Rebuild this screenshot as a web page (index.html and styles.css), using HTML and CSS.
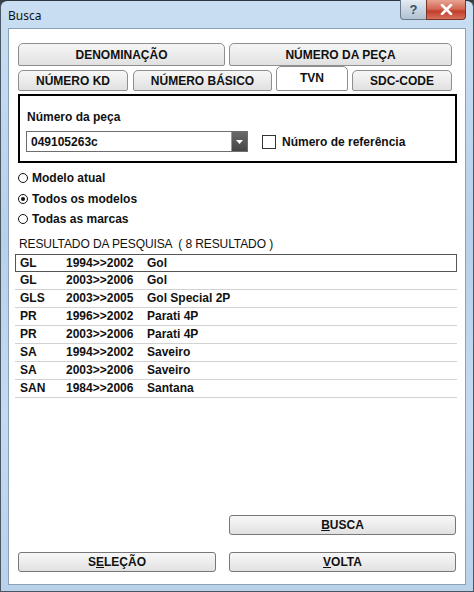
FILE: index.html
```html
<!DOCTYPE html>
<html lang="pt">
<head>
<meta charset="utf-8">
<title>Busca</title>
<link rel="stylesheet" href="styles.css">
</head>
<body>
<div class="window">
  <div class="titlebar">
    <span class="title">Busca</span>
    <div class="caption-buttons">
      <div class="cap-btn help">?</div>
      <div class="cap-btn close">
        <svg width="13" height="11" viewBox="0 0 13 11"><path d="M2 1 L11 10 M11 1 L2 10" stroke="#fff" stroke-width="2.6" stroke-linecap="round"/></svg>
      </div>
    </div>
  </div>
  <div class="client">
    <div class="tabs-row row1">
      <div class="tab w-denom">DENOMINAÇÃO</div>
      <div class="tab w-peca">NÚMERO DA PEÇA</div>
    </div>
    <div class="tabs-row row2">
      <div class="tab w-kd">NÚMERO KD</div>
      <div class="tab w-basico">NÚMERO BÁSICO</div>
      <div class="tab w-tvn active">TVN</div>
      <div class="tab w-sdc">SDC-CODE</div>
    </div>
    <div class="panel">
      <div class="label">Número da peça</div>
      <div class="panel-row">
        <div class="combo">
          <span class="combo-text">049105263c</span>
          <span class="combo-btn"><svg width="7" height="4" viewBox="0 0 7 4"><path d="M0 0 H7 L3.5 4 Z" fill="#fff"/></svg></span>
        </div>
        <label class="check"><span class="box"></span>Número de referência</label>
      </div>
    </div>
    <div class="radios">
      <div class="radio"><span class="circle"></span>Modelo atual</div>
      <div class="radio"><span class="circle on"></span>Todos os modelos</div>
      <div class="radio"><span class="circle"></span>Todas as marcas</div>
    </div>
    <div class="result-title">RESULTADO DA PESQUISA &nbsp;( 8 RESULTADO )</div>
    <div class="list">
      <div class="item focus"><span>GL</span><span>1994&gt;&gt;2002</span><span>Gol</span></div>
      <div class="item"><span>GL</span><span>2003&gt;&gt;2006</span><span>Gol</span></div>
      <div class="item"><span>GLS</span><span>2003&gt;&gt;2005</span><span>Gol Special 2P</span></div>
      <div class="item"><span>PR</span><span>1996&gt;&gt;2002</span><span>Parati 4P</span></div>
      <div class="item"><span>PR</span><span>2003&gt;&gt;2006</span><span>Parati 4P</span></div>
      <div class="item"><span>SA</span><span>1994&gt;&gt;2002</span><span>Saveiro</span></div>
      <div class="item"><span>SA</span><span>2003&gt;&gt;2006</span><span>Saveiro</span></div>
      <div class="item"><span>SAN</span><span>1984&gt;&gt;2006</span><span>Santana</span></div>
    </div>
    <div class="buttons">
      <div class="btn busca"><u>B</u>USCA</div>
      <div class="btn selecao">S<u>E</u>LEÇÃO</div>
      <div class="btn volta"><u>V</u>OLTA</div>
    </div>
  </div>
</div>
</body>
</html>
```

FILE: styles.css
```css
* { box-sizing: border-box; }
html, body { margin: 0; padding: 0; background: #3a3f45; }
body { width: 474px; height: 592px; overflow: hidden; font-family: "Liberation Sans", Arial, sans-serif; }

.window {
  width: 474px; height: 592px;
  display: flex; flex-direction: column;
  background: linear-gradient(180deg, #c9def2 0%, #b7d1ea 40%, #c4daf0 70%, #b9d2ea 100%);
  border: 1px solid #4a5866;
  border-top-color: #2c3540;
  border-radius: 7px 7px 0 0;
}

.titlebar {
  height: 27px; flex: none;
  display: flex; align-items: flex-start; justify-content: space-between;
}
.title { font-size: 12px; color: #111; padding: 6px 0 0 7px; font-family: "Noto Sans", "Liberation Sans", sans-serif; }
.caption-buttons { display: flex; margin-right: 7px; margin-top: -1px; }
.cap-btn {
  height: 20px; display: flex; align-items: center; justify-content: center;
  border: 1px solid #6b7a8a; border-top: none;
}
.help {
  width: 26px; border-radius: 0 0 0 4px; border-right: none;
  background: linear-gradient(180deg, #e4ecf4 0%, #c9d5e2 50%, #b3c2d2 100%);
  color: #3b4d63; font-size: 13px; font-weight: bold;
}
.close {
  width: 40px; border-radius: 0 0 4px 0;
  background: linear-gradient(180deg, #e8a493 0%, #d46a57 45%, #c2402c 60%, #d5705c 100%);
  border-color: #7a3328;
}

.client {
  flex: 1; margin: 0 7px 6px 7px;
  background: #fff;
  border: 1px solid #8aa1ba;
  display: flex; flex-direction: column;
  padding: 14px 9px 12px 6px;
}

.tabs-row { display: flex; margin-left: 3px; }
.row1 { gap: 4px; height: 23px; }
.row2 { height: 25px; align-items: flex-end; }
.tab {
  height: 21px;
  border: 1px solid #8e8e8e;
  border-radius: 5px 5px 2px 2px;
  background: linear-gradient(180deg, #f6f6f6 0%, #ececec 50%, #e0e0e0 100%);
  font-size: 12px; font-weight: bold; color: #111;
  display: flex; align-items: center; justify-content: center;
}
.row1 .tab { height: 23px; }
.w-denom { width: 207px; }
.w-peca { width: 223px; }
.w-kd { width: 110px; margin-right: 5px; }
.w-basico { width: 139px; margin-right: 4px; }
.w-tvn { width: 72px; margin-right: 4px; }
.w-sdc { width: 100px; }
.tab.active { height: 25px; background: #fff; align-items: flex-start; padding-top: 4px; }

.panel {
  margin: 3px 0 0 3px; width: 439px;
  border: 2px solid #000;
  padding: 14px 6px 9px 6px;
}
.label { font-size: 12px; font-weight: bold; line-height: 14px; color: #111; margin-left: 1px; margin-bottom: 7px; }
.panel-row { display: flex; align-items: center; }
.combo {
  width: 222px; height: 21px;
  border: 1px solid #6e6e6e;
  display: flex; align-items: stretch;
}
.combo-text { flex: 1; font-size: 12px; font-weight: bold; color: #111; padding-left: 4px; display: flex; align-items: center; }
.combo-btn {
  width: 16px; background: linear-gradient(180deg, #6a6a6a, #454545);
  border-left: 1px solid #9a9a9a;
  display: flex; align-items: center; justify-content: center;
}
.check { display: flex; align-items: center; margin-left: 14px; font-size: 12px; font-weight: bold; color: #111; }
.box { width: 14px; height: 14px; border: 1px solid #333; background: #fff; margin-right: 6px; }

.radios { margin-top: 5px; margin-left: 3px; }
.radio { height: 20.5px; display: flex; align-items: center; font-size: 12px; font-weight: bold; color: #111; }
.circle {
  width: 10px; height: 10px; border-radius: 50%;
  border: 1.6px solid #111; margin-right: 4px; background: #fff;
  display: flex; align-items: center; justify-content: center;
}
.circle.on::after { content: ""; width: 4px; height: 4px; border-radius: 50%; background: #111; }

.result-title { margin: 7px 0 0 4px; font-size: 12px; line-height: 14px; color: #111; letter-spacing: -0.1px; }

.list { margin-top: 3px; width: 442px; }
.item {
  height: 18px;
  display: grid; grid-template-columns: 46px 81px 1fr;
  align-items: center; padding-left: 5px;
  font-size: 12px; font-weight: bold; color: #111;
  border-bottom: 1px solid #d2d2d2;
}
.item.focus { border: 1px solid #555; padding-left: 4px; }

.buttons {
  margin-top: auto; margin-left: 3px;
  display: grid; grid-template-columns: 198px 227px; column-gap: 13px; row-gap: 17px;
}
.btn {
  height: 20px;
  border: 1px solid #777; border-radius: 3px;
  background: linear-gradient(180deg, #f7f7f7 0%, #ededed 50%, #e1e1e1 100%);
  font-size: 12px; font-weight: bold; color: #111;
  display: flex; align-items: center; justify-content: center;
}
.busca { grid-column: 2; }
.selecao { grid-column: 1; }
.volta { grid-column: 2; }
```
